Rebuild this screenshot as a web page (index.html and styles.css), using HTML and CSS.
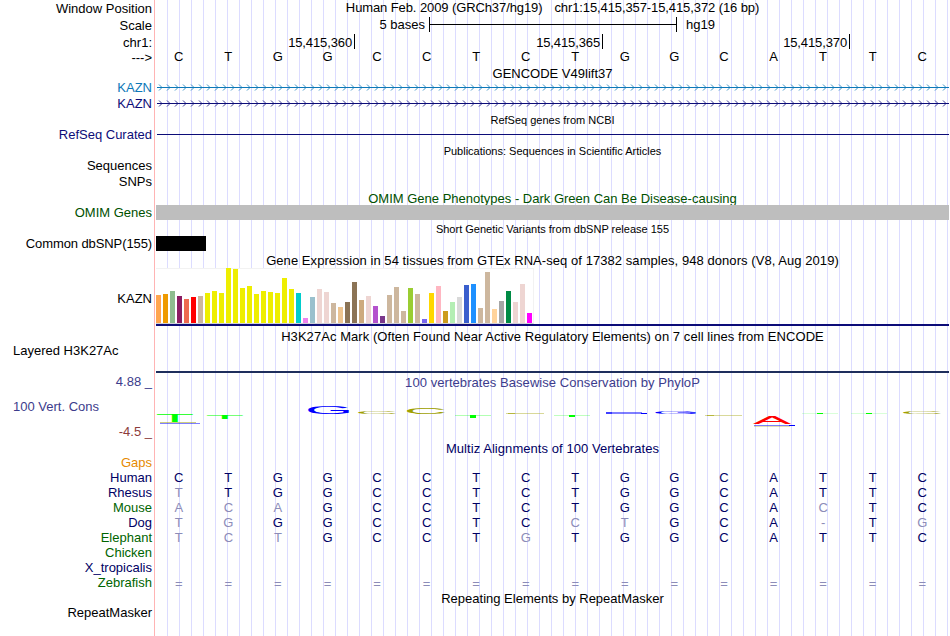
FILE: index.html
```html
<!DOCTYPE html>
<html>
<head>
  <meta charset="utf-8">
  <title>Human chr1:15,415,357-15,415,372</title>
  <link rel="stylesheet" href="styles.css">
</head>
<body>
  <div class="browser">
    <div class="row ruler">
      <div class="label">Window Position</div>
      <div class="track center position"><span>Human Feb. 2009 (GRCh37/hg19)</span><span>chr1:15,415,357-15,415,372 (16 bp)</span></div>
    </div>
    <div class="row ruler">
      <div class="label">Scale</div>
      <div class="track scale">
        <span class="scale-size">5 bases</span>
        <span class="scale-bar"></span>
        <span>hg19</span>
      </div>
    </div>
    <div class="row ruler coords">
      <div class="label">chr1:</div>
      <div class="track ticks"><span>15,415,360</span><span>15,415,365</span><span>15,415,370</span></div>
    </div>
    <div class="row ruler">
      <div class="label">---&gt;</div>
      <div class="track bases" data-seq="CTGGCCTCTGGCATTC"></div>
    </div>

    <div class="title">GENCODE V49lift37</div>
    <div class="row item gene-light">
      <div class="label">KAZN</div>
      <svg class="track arrows" height="16"></svg>
    </div>
    <div class="row item gene">
      <div class="label">KAZN</div>
      <svg class="track arrows" height="16"></svg>
    </div>

    <div class="title small">RefSeq genes from NCBI</div>
    <div class="row item refseq">
      <div class="label">RefSeq Curated</div>
      <div class="track"><div class="intron"></div></div>
    </div>

    <div class="title small">Publications: Sequences in Scientific Articles</div>
    <div class="row item"><div class="label">Sequences</div></div>
    <div class="row item"><div class="label">SNPs</div></div>

    <div class="title low omim">OMIM Gene Phenotypes - Dark Green Can Be Disease-causing</div>
    <div class="row omim">
      <div class="label">OMIM Genes</div>
      <div class="track block-gray"></div>
    </div>

    <div class="title small snp-title">Short Genetic Variants from dbSNP release 155</div>
    <div class="row item">
      <div class="label tight">Common dbSNP(155)</div>
      <div class="track"><div class="snp"></div></div>
    </div>

    <div class="title low wide">Gene Expression in 54 tissues from GTEx RNA-seq of 17382 samples, 948 donors (V8, Aug 2019)</div>
    <div class="row gtex">
      <div class="label">KAZN</div>
      <div class="track">
        <div class="bars" id="bars"></div>
        <div class="gene-model"></div>
      </div>
    </div>

    <div class="title wide">H3K27Ac Mark (Often Found Near Active Regulatory Elements) on 7 cell lines from ENCODE</div>
    <div class="row h3k">
      <div class="label left">Layered H3K27Ac</div>
      <div class="track"></div>
    </div>

    <div class="row cons">
      <div class="label">
        <div class="max">4.88 _</div>
        <div class="left">100 Vert. Cons</div>
        <div class="min">-4.5 _</div>
      </div>
      <div class="track">
        <div class="cons-title wide">100 vertebrates Basewise Conservation by PhyloP</div>
        <svg id="logo" width="793" height="50" viewBox="156 389 793 50"></svg>
      </div>
    </div>

    <div class="title low wide multiz">Multiz Alignments of 100 Vertebrates</div>
    <div class="row"><div class="label gaps">Gaps</div></div>
    <div class="row align">
      <div class="label">Human</div>
      <div class="track bases" data-seq="CTGGCCTCTGGCATTC"></div>
    </div>
    <div class="row align">
      <div class="label">Rhesus</div>
      <div class="track bases" data-seq="tTGGCCTCTGGCATTC"></div>
    </div>
    <div class="row align">
      <div class="label green">Mouse</div>
      <div class="track bases" data-seq="acaGCCTCTGGCAcTC"></div>
    </div>
    <div class="row align">
      <div class="label">Dog</div>
      <div class="track bases" data-seq="tgGGCCTCctGCA-Tg"></div>
    </div>
    <div class="row align">
      <div class="label green">Elephant</div>
      <div class="track bases" data-seq="tctGCCTgTGGCATTC"></div>
    </div>
    <div class="row align"><div class="label green">Chicken</div></div>
    <div class="row align"><div class="label">X_tropicalis</div></div>
    <div class="row align">
      <div class="label green">Zebrafish</div>
      <div class="track bases unaligned" data-seq="================"></div>
    </div>

    <div class="title low">Repeating Elements by RepeatMasker</div>
    <div class="row"><div class="label">RepeatMasker</div></div>
  </div>
  <script src="tracks.js"></script>
</body>
</html>
```
FILE: styles.css
```css
body {
  margin: 0;
  background: white;
  font-family: "Liberation Sans", Arial, Helvetica, sans-serif;
  font-size: 13px;
  line-height: 15px;
  color: #000;
}
.browser {
  width: 949px;
  height: 636px;
  overflow: hidden;
  background:
    linear-gradient(#ffb4b4, #ffb4b4) 154px 0 / 1px 100% no-repeat,
    repeating-linear-gradient(to right, #dcdcff 0, #dcdcff 1px, transparent 1px, transparent 12px) 167px 0 / 782px 100% no-repeat;
}
.row {
  display: flex;
  height: 15px;
}
.label {
  width: 152px;
  margin-right: 4px;
  flex-shrink: 0;
  text-align: right;
  white-space: nowrap;
}
.left {
  text-align: left;
  padding-left: 13px;
  box-sizing: border-box;
}
.track {
  width: 793px;
  flex-shrink: 0;
}
.center,
.title,
.cons-title {
  text-align: center;
  white-space: nowrap;
}
.title {
  height: 14px;
  margin-left: 156px;
}
.title.low {
  padding-top: 1px;
}
.title.small {
  height: 14px;
  padding-top: 1px;
  font-size: 11px;
}
.wide {
  letter-spacing: 0.06px;
}
.tight,
.position {
  letter-spacing: -0.1px;
}

/* ruler */
.ruler {
  height: 17px;
}
.ruler .label {
  padding-top: 1px;
}
.position span + span {
  margin-left: 12px;
}
.row.coords {
  height: 15px;
}
.scale {
  display: flex;
}
.scale-size {
  width: 269px;
  margin-right: 4px;
  text-align: right;
}
.scale-bar {
  width: 246px;
  height: 15px;
  margin-right: 9px;
  border-left: 1px solid #000;
  border-right: 1px solid #000;
  background: linear-gradient(#000, #000) 0 7px / 100% 1px no-repeat;
}
.ticks {
  display: flex;
  text-align: right;
  letter-spacing: -0.12px;
}
.ticks span {
  width: 247px;
  height: 15px;
  padding: 1px 2px 0 0;
  border-right: 1px solid #000;
  box-sizing: border-box;
}
.ticks span:first-child {
  width: 199px;
}
.ticks span:nth-child(2) {
  width: 248px;
}
.bases {
  display: grid;
  grid-template-columns: repeat(16, 1fr);
  text-align: center;
}
.bases span {
  margin-left: -4px;
}
.unaligned {
  padding-top: 1px;
}

/* genes */
.item {
  height: 16px;
}
.arrows {
  stroke: currentColor;
  fill: none;
}
.gene-light {
  color: #0c78b8;
}
.gene,
.refseq {
  color: #0c0c78;
}
.intron {
  height: 1px;
  margin: 7px 0 0 1px;
  background: #0c0c78;
}
.omim {
  color: #005000;
}
.block-gray {
  background: #bebebe;
}
.title.snp-title {
  padding-top: 2px;
}
.snp {
  width: 50px;
  height: 15px;
  background: #000;
}

/* expression */
.gtex {
  height: 62px;
}
.gtex .label {
  padding-top: 24px;
}
.bars {
  display: flex;
  align-items: flex-end;
  gap: 2px;
  width: 378px;
  height: 56px;
  margin-top: 1px;
  box-sizing: border-box;
  border: 1px solid #f2f2f2;
  border-left: none;
  border-bottom-color: #d0d0d8;
  background: white;
}
.bars span {
  width: 5px;
  flex-shrink: 0;
}
.gene-model {
  height: 2px;
  background: #0c0c78;
}
.h3k {
  height: 31px;
}
.h3k .track {
  height: 28px;
  border-bottom: 2px solid #1e2e5c;
}

/* conservation */
.cons {
  height: 66px;
  color: #3c3c8c;
}
.cons .max,
.cons .left {
  height: 25px;
}
.cons .min {
  color: #8c3c3c;
}
.cons-title {
  padding-top: 1px;
  height: 14px;
}
#logo {
  display: block;
  font-size: 10px;
}
.multiz,
.align {
  color: #000064;
}
.gaps {
  color: #e68a00;
}
.green {
  color: #006400;
}
.diff {
  color: #8c8cb8;
}
```
FILE: tracks.js
```js
// one cell per base, lower case marks a mismatch
document.querySelectorAll('.bases').forEach(function (track) {
  track.dataset.seq.split('').forEach(function (base) {
    var cell = document.createElement('span');
    cell.textContent = base.toUpperCase();
    if (/[a-z=-]/.test(base)) cell.className = 'diff';
    track.appendChild(cell);
  });
});

// strand arrows every 8px
document.querySelectorAll('.arrows').forEach(function (svg) {
  var d = '';
  for (var x = 3; x < 790; x += 8) {
    d += 'M' + x + ' 4.5l3 3l-3 3';
  }
  svg.innerHTML = '<path d="M1 7.5H793"/><path stroke-width="0.8" d="' + d + '"/>';
});

var tissues = [
  [28, '#ffa54f'], [29, '#ee9a00'], [32, '#8fbc8f'], [27, '#8b1c62'], [24, '#ee6a50'], [26, '#ff0000'],
  [27, '#cdb79e'], [30, '#eeee00'], [32, '#eeee00'], [30, '#eeee00'], [55, '#eeee00'], [54, '#eeee00'],
  [35, '#eeee00'], [37, '#eeee00'], [29, '#eeee00'], [32, '#eeee00'], [31, '#eeee00'], [30, '#eeee00'],
  [45, '#eeee00'], [34, '#eeee00'], [30, '#00cdcd'], [5, '#ee82ee'], [26, '#9ac0cd'], [34, '#eed5d2'],
  [31, '#eed5d2'], [20, '#cdb79e'], [16, '#eec591'], [21, '#8b7355'], [41, '#8b7355'], [23, '#cdaa7d'],
  [27, '#eed5d2'], [17, '#b452cd'], [7, '#7a378b'], [28, '#cdb79e'], [36, '#cdb79e'], [12, '#cdb79e'],
  [35, '#9acd32'], [29, '#cdb79e'], [4, '#7a67ee'], [30, '#ffd700'], [37, '#ffb6c1'], [12, '#cd9b1d'],
  [21, '#b4eeb4'], [26, '#d9d9d9'], [38, '#3a5fcd'], [39, '#1e90ff'], [15, '#cdb79e'], [51, '#cdb79e'],
  [14, '#ffd39b'], [22, '#a6a6a6'], [32, '#008b45'], [21, '#eed5d2'], [39, '#eed5d2'], [10, '#ff00ff']
];
document.getElementById('bars').innerHTML = tissues.map(function (t) {
  return '<span style="height:' + t[0] + 'px;background:' + t[1] + '"></span>';
}).join('');

// letter, left, top, width, height
var letters = [
  ['T', 157, 415, 36, 7],
  ['T', 207, 415, 36, 4],
  ['G', 308, 406.5, 41, 7.5],
  ['C', 358, 411, 38, 3],
  ['C', 407, 408, 38, 6],
  ['G', 655, 411, 41, 3],
  ['A', 753, 416, 38, 8],
  ['C', 903, 411, 38, 3]
];
// scores near zero: left, top, width, height, fill, opacity
var slivers = [
  [160, 422, 36, 1, '#a0a000', 0.5], [160, 423, 40, 1, '#0000ff', 0.5],
  [455, 415, 36, 1, '#00ff00', 0.3], [470, 415, 6, 3, '#00ff00', 1],
  [506, 413, 38, 1, '#a0a000', 0.4], [508, 413, 7, 1, '#a0a000', 0.6],
  [554, 415, 36, 1, '#00ff00', 0.25], [569, 415, 6, 2, '#00ff00', 1],
  [606, 412, 36, 1, '#0000ff', 0.5], [606, 413, 41, 1, '#0000ff', 0.5], [606, 412, 6, 2, '#0000ff', 0.5], [641, 413, 6, 1, '#0000ff', 1],
  [705, 415, 37, 1, '#a0a000', 0.4], [707, 415, 7, 1, '#a0a000', 0.6],
  [754, 425, 36, 1, '#0000ff', 0.5], [754, 426, 36, 1, '#a0a000', 0.3], [789, 425, 6, 1, '#0000ff', 1],
  [802, 413, 36, 1, '#00ff00', 0.15], [817, 413, 6, 1, '#00ff00', 1],
  [851, 413, 36, 1, '#00ff00', 0.15], [866, 413, 6, 1, '#00ff00', 1]
];
// ink box of each letter in em: left, width, below baseline, height
var ink = {
  A: [0.002, 0.663, 0, 0.688],
  C: [0.05, 0.635, 0.01, 0.71],
  G: [0.05, 0.66, 0.01, 0.71],
  T: [0.022, 0.568, 0, 0.688]
};
var fills = { A: '#ff0000', C: '#a0a000', G: '#0000ff', T: '#00ff00' };
document.getElementById('logo').innerHTML = letters.map(function (l) {
  var box = ink[l[0]];
  var sx = l[3] / (box[1] * 10);
  var sy = l[4] / (box[3] * 10);
  var x = l[1] - box[0] * 10 * sx;
  var y = l[2] + l[4] - box[2] * 10 * sy;
  return '<text fill="' + fills[l[0]] + '" transform="translate(' + x + ' ' + y + ') scale(' + sx + ' ' + sy + ')">' + l[0] + '</text>';
}).join('') + slivers.map(function (s) {
  return '<rect x="' + s[0] + '" y="' + s[1] + '" width="' + s[2] + '" height="' + s[3] + '" fill="' + s[4] + '" opacity="' + s[5] + '"/>';
}).join('');
```
